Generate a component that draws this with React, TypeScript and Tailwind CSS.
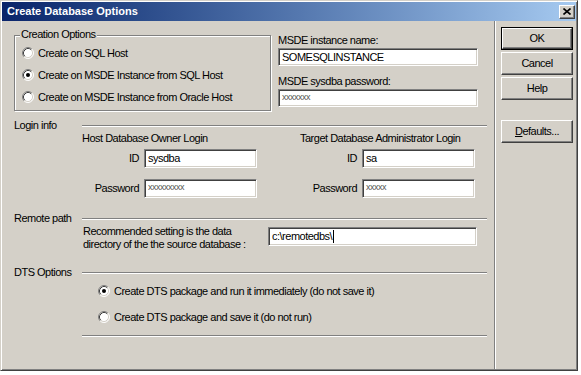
import React from 'react';

const Radio: React.FC<{ checked?: boolean }> = ({ checked }) => (
  <svg width="12" height="12" viewBox="0 0 12 12" className="shrink-0">
    <circle cx="6" cy="6" r="5" fill="#fff" />
    <path d="M2.11 9.89A5.5 5.5 0 0 1 9.89 2.11" stroke="#808080" fill="none" />
    <path d="M9.89 2.11A5.5 5.5 0 0 1 2.11 9.89" stroke="#fff" fill="none" />
    <path d="M2.82 9.18A4.5 4.5 0 0 1 9.18 2.82" stroke="#404040" fill="none" />
    <path d="M9.18 2.82A4.5 4.5 0 0 1 2.82 9.18" stroke="#d4d0c8" fill="none" />
    {checked && <circle cx="6" cy="6" r="2" fill="#000" />}
  </svg>
);

const Field: React.FC<{ className: string; children?: React.ReactNode }> = ({ className, children }) => (
  <div
    className={`bg-white border border-t-[#808080] border-l-[#808080] border-b-white border-r-white shadow-[inset_1px_1px_0_#404040,inset_-1px_-1px_0_#d4d0c8] pl-[3px] flex items-center ${className}`}
  >
    {children}
  </div>
);

const Secret: React.FC<{ n: number }> = ({ n }) => (
  <span className="text-[9px] leading-none text-[#555] self-start mt-[3px]">{'x'.repeat(n)}</span>
);

const Button: React.FC<{ children: React.ReactNode; isDefault?: boolean; className?: string }> = ({
  children,
  isDefault,
  className = '',
}) => (
  <div className={`w-[72px] h-[23px] ${isDefault ? 'border border-black' : ''} ${className}`}>
    <div className="w-full h-full border border-t-white border-l-white border-b-[#404040] border-r-[#404040] shadow-[inset_-1px_-1px_0_#808080] flex items-center justify-center">
      {children}
    </div>
  </div>
);

const Section: React.FC<{ label: string; className?: string }> = ({ label, className = '' }) => (
  <div className={`flex items-center h-[13px] ${className}`}>
    <span className="w-[80px] pl-[12px] whitespace-nowrap">{label}</span>
    <div className="flex-1 mr-[7px] border-t border-t-[#808080] border-b border-b-white" />
  </div>
);

const LoginColumn: React.FC<{ title: string; id: string; pw: number }> = ({ title, id, pw }) => (
  <div className="w-[175px] flex flex-col">
    <div className="h-[13px] leading-[13px] whitespace-nowrap">{title}</div>
    <div className="flex items-center justify-end gap-[5px] mt-[4px]">
      <span>ID</span>
      <Field className="w-[113px] h-[19px]">{id}</Field>
    </div>
    <div className="flex items-center justify-end gap-[5px] mt-[11px]">
      <span>Password</span>
      <Field className="w-[113px] h-[19px]">
        <Secret n={pw} />
      </Field>
    </div>
  </div>
);

export default function App() {
  return (
    <div
      className="w-[581px] h-[375px] bg-white text-black text-[11px] leading-[13px] tracking-[-0.5px]"
      style={{ fontFamily: '"Liberation Sans", Arial, sans-serif' }}
    >
      <div className="w-[578px] h-[371px] bg-[#d4d0c8] border border-[#404040] border-l-[#d4d0c8] border-t-[#d4d0c8] shadow-[inset_1px_1px_0_#fff,inset_-1px_-1px_0_#808080] p-[1px] flex flex-col">
        {/* title bar */}
        <div className="h-[19px] flex items-center justify-between bg-gradient-to-r from-[#0a246a] to-[#a6caf0] pl-[5px] pr-[1px]">
          <span className="text-white font-bold tracking-normal">Create Database Options</span>
          <div className="w-[16px] h-[14px] bg-[#d4d0c8] border border-t-white border-l-white border-b-[#404040] border-r-[#404040] shadow-[inset_-1px_-1px_0_#808080] flex items-center justify-center">
            <svg width="8" height="7" viewBox="0 0 8 7">
              <path d="M0.5 0.5L7.5 6.5M7.5 0.5L0.5 6.5" stroke="#000" strokeWidth="1.6" />
            </svg>
          </div>
        </div>

        <div className="flex-1 flex">
          {/* main content */}
          <div className="w-[492px] flex flex-col">
            <div className="flex mt-[7px]">
              <div className="ml-[12px] pt-[7px]">
                <div className="relative w-[257px] h-[76px] border border-[#808080] shadow-[inset_1px_1px_0_#fff,1px_1px_0_#fff] pl-[7px] pt-[6px]">
                  <span className="absolute -top-[8px] left-[5px] px-[1px] bg-[#d4d0c8]">Creation Options</span>
                  {[
                    ['Create on SQL Host', false],
                    ['Create on MSDE Instance from SQL Host', true],
                    ['Create on MSDE Instance from Oracle Host', false],
                  ].map(([t, c]) => (
                    <div key={t as string} className="h-[22px] flex items-center gap-[4px]">
                      <Radio checked={c as boolean} />
                      <span className="whitespace-nowrap">{t as string}</span>
                    </div>
                  ))}
                </div>
              </div>
              <div className="ml-[7px] pt-[6px] flex flex-col">
                <span>MSDE instance name:</span>
                <Field className="w-[200px] h-[18px] mt-[1px]">SOMESQLINSTANCE</Field>
                <span className="mt-[9px]">MSDE sysdba password:</span>
                <Field className="w-[200px] h-[18px] mt-[1px]">
                  <Secret n={7} />
                </Field>
              </div>
            </div>

            <Section label="Login info" className="mt-[8px]" />
            <div className="flex ml-[80px] gap-[43px]">
              <LoginColumn title="Host Database Owner Login" id="sysdba" pw={9} />
              <LoginColumn title="Target Database Administrator Login" id="sa" pw={5} />
            </div>

            <Section label="Remote path" className="mt-[14px]" />
            <div className="flex ml-[81px]">
              <div className="w-[185px]">
                Recommended setting is the data
                <br />
                directory of the the source database :
              </div>
              <Field className="w-[209px] h-[19px] mt-[2px]">
                c:\remotedbs\
                <span className="inline-block w-[1px] h-[13px] bg-black ml-[1px]" />
              </Field>
            </div>

            <Section label="DTS Options" className="mt-[15px]" />
            <div className="pl-[96px] mt-[1px] flex flex-col gap-[4px]">
              <div className="h-[22px] flex items-center gap-[4px]">
                <Radio checked />
                <span>Create DTS package and run it immediately (do not save it)</span>
              </div>
              <div className="h-[22px] flex items-center gap-[4px]">
                <Radio />
                <span>Create DTS package and save it (do not run)</span>
              </div>
            </div>
            <div className="ml-[80px] mr-[7px] mt-[7px] border-t border-t-[#808080] border-b border-b-white" />
          </div>

          {/* separator */}
          <div className="w-[2px] border-l border-l-[#808080] border-r border-r-white" />

          {/* buttons */}
          <div className="flex-1 pl-[5px] pt-[6px] flex flex-col">
            <Button isDefault>OK</Button>
            <Button className="mt-[2px]">Cancel</Button>
            <Button className="mt-[2px]">Help</Button>
            <Button className="mt-[20px]">
              <span>
                <span className="underline">D</span>efaults...
              </span>
            </Button>
          </div>
        </div>
      </div>
    </div>
  );
}
